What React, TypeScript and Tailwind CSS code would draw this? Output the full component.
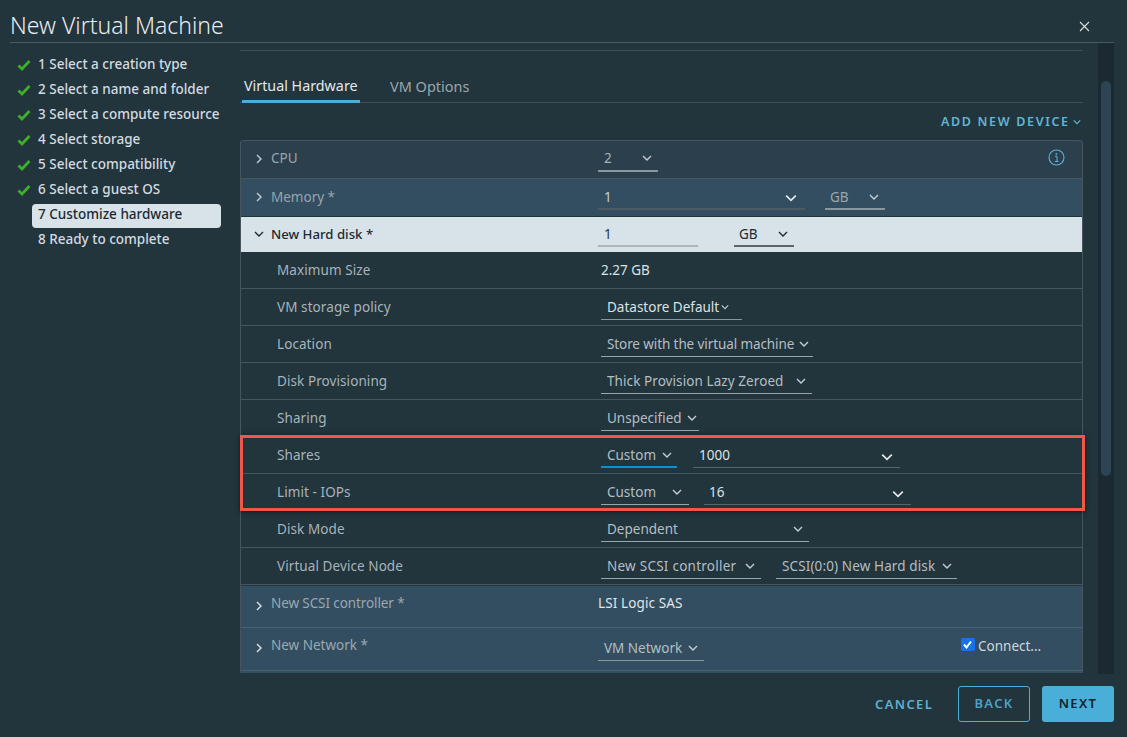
import React from "react";

function Chev({ x, y, size = 10, color = "#c5ced4", dir = "down", sw = 1.4 }: { x: number; y: number; size?: number; color?: string; dir?: "down" | "right"; sw?: number }) {
  return (
    <svg className="absolute" style={{ left: x, top: y }} width={size} height={size} viewBox="0 0 10 10" fill="none">
      <path d={dir === "down" ? "M1 3 L5 7 L9 3" : "M3 1 L7 5 L3 9"} stroke={color} strokeWidth={sw} />
    </svg>
  );
}

function Txt({ x, y, children, cls = "" }: { x: number; y: number; children: React.ReactNode; cls?: string }) {
  return (
    <div className={`absolute whitespace-nowrap text-[13.5px] leading-[18px] ${cls}`} style={{ left: x, top: y }}>
      {children}
    </div>
  );
}

function Line({ x, y, w, color = "#8b979e", h = 1 }: { x: number; y: number; w: number; color?: string; h?: number }) {
  return <div className="absolute" style={{ left: x, top: y, width: w, height: h, background: color }} />;
}

function Check({ y }: { y: number }) {
  return (
    <svg className="absolute left-[17px]" style={{ top: y }} width="14" height="12" viewBox="0 0 14 12" fill="none">
      <path d="M1.5 6.5 L5 10 L12.5 2" stroke="#3fae2a" strokeWidth="2.8" />
    </svg>
  );
}

const steps = [
  "1 Select a creation type",
  "2 Select a name and folder",
  "3 Select a compute resource",
  "4 Select storage",
  "5 Select compatibility",
  "6 Select a guest OS",
];

function Row({ top, label, h = 36 }: { top: number; label: string; h?: number }) {
  return (
    <>
      <div className="absolute left-[277px] text-[13.5px] leading-[18px] tracking-[0.08px] text-[#a8b3ba] whitespace-nowrap" style={{ top: top + 9 }}>
        {label}
      </div>
      <Line x={241} y={top + h} w={841} color="#46555e" />
    </>
  );
}

function Sel({ x, top, w, text, chevX, line = "#9aa5ab", tc = "text-[#b4bec4]" }: { x: number; top: number; w: number; text: string; chevX: number; line?: string; tc?: string }) {
  return (
    <>
      <Txt x={x + 6} y={top + 9} cls={tc}>{text}</Txt>
      <Chev x={chevX} y={top + 13} size={10} color="#c5ced4" />
      <Line x={x} y={top + 30} w={w} color={line} />
    </>
  );
}

export default function App() {
  return (
    <div className="relative w-[1127px] h-[737px] overflow-hidden bg-[#22343c] [font-family:Inter,'Liberation_Sans',sans-serif] font-normal">
      <h1 className="absolute left-[10px] top-[10px] text-[23px] leading-[30px] font-light text-[#e8edf0] whitespace-nowrap">New Virtual Machine</h1>
      <svg className="absolute left-[1079px] top-[21px]" width="11" height="11" viewBox="0 0 11 11" fill="none">
        <path d="M1 1 L10 10 M10 1 L1 10" stroke="#d7dee2" strokeWidth="1.1" />
      </svg>
      <Line x={10} y={42} w={1104} color="#485a62" />

      {steps.map((s, i) => (
        <React.Fragment key={s}>
          <Check y={59 + i * 25} />
          <Txt x={38} y={55 + i * 25} cls="font-medium text-[#d3dbe0]">{s}</Txt>
        </React.Fragment>
      ))}
      <div className="absolute left-[32px] top-[204px] w-[189px] h-[24px] rounded-[4px] bg-[#d8e3e9]" />
      <Txt x={38} y={205} cls="font-medium text-[#1b2a32]">7 Customize hardware</Txt>
      <Txt x={38} y={230} cls="font-medium text-[#d3dbe0]">8 Ready to complete</Txt>

      <Line x={240} y={50} w={843} color="#3f4f57" />
      <Txt x={244} y={77} cls="text-[#e3e9ec] !text-[14.3px]">Virtual Hardware</Txt>
      <Txt x={390} y={77} cls="text-[#9aa7ae] !text-[14.5px]">VM Options</Txt>
      <Line x={240} y={102} w={843} color="#3f4f57" />
      <Line x={242} y={100} w={118} h={3} color="#49afd9" />
      <Txt x={941} y={113} cls="!text-[12.5px] font-semibold tracking-[1.65px] text-[#63b4d3]">ADD NEW DEVICE</Txt>
      <Chev x={1073} y={118} size={8} color="#63b4d3" sw={1.5} />

      <div className="absolute left-[1098px] top-[43px] w-[16px] h-[631px] bg-[#1b2a32]" />
      <div className="absolute left-[1101px] top-[81px] w-[10px] h-[395px] rounded-[5px] bg-[#2d4552]" />

      <div className="absolute left-[240px] top-[140px] w-[843px] h-[533px] overflow-hidden rounded-t-[3px] border-x border-[#46555e]" />
      <div className="absolute left-[241px] top-[140px] w-[841px] h-[39px] bg-[#2b3f4d] border-t border-[#46565f] rounded-t-[3px]" />
      <Line x={241} y={178} w={841} color="#46565f" />
      <Chev x={254} y={154} size={10} dir="right" color="#c5ced4" />
      <Txt x={271} y={149} cls="text-[#9aa6ad]">CPU</Txt>
      <Txt x={604} y={149} cls="text-[#a7b2b8]">2</Txt>
      <Chev x={642} y={153} size={10} />
      <Line x={598} y={170} w={60} color="#8b979e" h={2} />
      <svg className="absolute left-[1048px] top-[149px]" width="17" height="17" viewBox="0 0 17 17" fill="none">
        <circle cx="8.5" cy="8.5" r="7.5" stroke="#5fb3d4" strokeWidth="1.1" />
        <path d="M7 7.2 H9 V12.5 M6.8 12.5 H10.6" stroke="#5fb3d4" strokeWidth="1" />
        <circle cx="8.4" cy="4.8" r="0.9" fill="#5fb3d4" />
      </svg>

      <div className="absolute left-[241px] top-[179px] w-[841px] h-[37px] bg-[#324e60]" />
      <Chev x={254} y={192} size={10} dir="right" />
      <Txt x={271} y={188} cls="text-[#97a5ad]">Memory *</Txt>
      <Txt x={604} y={188} cls="text-[#c5ced3]">1</Txt>
      <Chev x={785} y={192} size={12} color="#e4e9ec" />
      <Line x={598} y={208} w={207} color="#4b5a64" h={2} />
      <Txt x={830} y={188} cls="text-[#9aa7ae]">GB</Txt>
      <Chev x={869} y={192} size={10} />
      <Line x={825} y={208} w={60} color="#8a969d" h={2} />

      <div className="absolute left-[241px] top-[217px] w-[841px] h-[35px] bg-[#d8e3e9]" />
      <Chev x={254} y={229} size={10} color="#1b2a32" />
      <Txt x={271} y={225} cls="font-medium text-[#1c2a32] !text-[13.2px]">New Hard disk *</Txt>
      <Txt x={604} y={225} cls="text-[#2a3840]">1</Txt>
      <Line x={598} y={245} w={100} color="#aeb7ba" h={2} />
      <Txt x={739} y={225} cls="text-[#1c2a32]">GB</Txt>
      <Chev x={778} y={229} size={10} color="#1b2a32" />
      <Line x={734} y={245} w={60} color="#5a666c" h={2} />

      <Row top={252} label="Maximum Size" />
      <Txt x={601} y={261} cls="text-[#dbe2e6]">2.27 GB</Txt>

      <Row top={289} label="VM storage policy" />
      <Txt x={607} y={298} cls="text-[#dbe2e6]">Datastore Default</Txt>
      <Chev x={721} y={303} size={8} />
      <Line x={601} y={319} w={141} />

      <Row top={326} label="Location" />
      <Sel x={601} top={326} w={212} text="Store with the virtual machine" chevX={799} tc="text-[#b4bec4] tracking-[-0.1px]" />

      <Row top={363} label="Disk Provisioning" />
      <Sel x={601} top={363} w={211} text="Thick Provision Lazy Zeroed" chevX={796} tc="text-[#b4bec4] tracking-[0.08px]" />

      <Row top={400} label="Sharing" />
      <Sel x={601} top={400} w={98} text="Unspecified" chevX={687} />

      <Row top={437} label="Shares" />
      <Sel x={601} top={437} w={76} text="Custom" chevX={662} line="#0f8fcf" />
      <Line x={601} y={466} w={76} h={2} color="#0f8fcf" />
      <Txt x={699} y={446} cls="text-[#dbe2e6]">1000</Txt>
      <Chev x={881} y={451} size={12} color="#e4e9ec" />
      <Line x={693} y={467} w={207} color="#56646c" />

      <Row top={474} label="Limit - IOPs" />
      <Sel x={601} top={474} w={88} text="Custom" chevX={672} />
      <Txt x={709} y={483} cls="text-[#dbe2e6]">16</Txt>
      <Chev x={892} y={488} size={12} color="#e4e9ec" />
      <Line x={704} y={504} w={207} color="#56646c" />

      <Row top={511} label="Disk Mode" />
      <Sel x={601} top={511} w={208} text="Dependent" chevX={793} />

      <Row top={548} label="Virtual Device Node" />
      <Sel x={601} top={548} w={160} text="New SCSI controller" chevX={745} tc="text-[#b4bec4] tracking-[0.25px]" />
      <Sel x={776} top={548} w={181} text="SCSI(0:0) New Hard disk" chevX={942} tc="text-[#b4bec4] tracking-[0.12px]" />

      <div className="absolute left-[241px] top-[586px] w-[841px] h-[87px] bg-[#324e60]" />
      <Line x={241} y={627} w={841} color="#4c616e" />
      <Line x={241} y={670} w={841} color="#4c616e" />
      <Chev x={254} y={601} size={10} dir="right" color="#dfe5e8" />
      <Txt x={271} y={594} cls="text-[#9aa8b0] tracking-[-0.1px]">New SCSI controller *</Txt>
      <Txt x={598} y={594} cls="text-[#e0e6e9] tracking-[0.12px]">LSI Logic SAS</Txt>
      <Chev x={254} y={643} size={10} dir="right" color="#dfe5e8" />
      <Txt x={271} y={636} cls="text-[#9aa8b0]">New Network *</Txt>
      <Txt x={604} y={639} cls="text-[#b4bec4]">VM Network</Txt>
      <Chev x={688} y={643} size={10} />
      <Line x={598} y={660} w={106} />
      <div className="absolute left-[961px] top-[638px] w-[14px] h-[13px] rounded-[2px] bg-[#1672e8]">
        <svg className="absolute left-[1px] top-[1px]" width="11" height="11" viewBox="0 0 11 11" fill="none">
          <path d="M2 5.5 L4.5 8.5 L9 2.5" stroke="#fff" strokeWidth="2" />
        </svg>
      </div>
      <Txt x={978} y={637} cls="text-[#cfd7dc]">Connect...</Txt>

      <div className="absolute left-[240px] top-[435px] w-[845px] h-[76px] border-[3px] border-[#f0574a] shadow-[0_1px_5px_rgba(0,0,0,0.5)]" />

      <div className="absolute left-[875px] top-[696px] text-[13px] leading-[16px] font-semibold tracking-[1.35px] text-[#5fb0cf]">CANCEL</div>
      <div className="absolute left-[958px] top-[686px] w-[72px] h-[36px] rounded-[3px] border border-[#49afd9] flex items-center justify-center text-[13px] font-semibold tracking-[1.35px] text-[#49a3c8]">BACK</div>
      <div className="absolute left-[1042px] top-[686px] w-[72px] h-[36px] rounded-[3px] bg-[#49afd9] flex items-center justify-center text-[13px] font-semibold tracking-[1.35px] text-[#10222c]">NEXT</div>
    </div>
  );
}
